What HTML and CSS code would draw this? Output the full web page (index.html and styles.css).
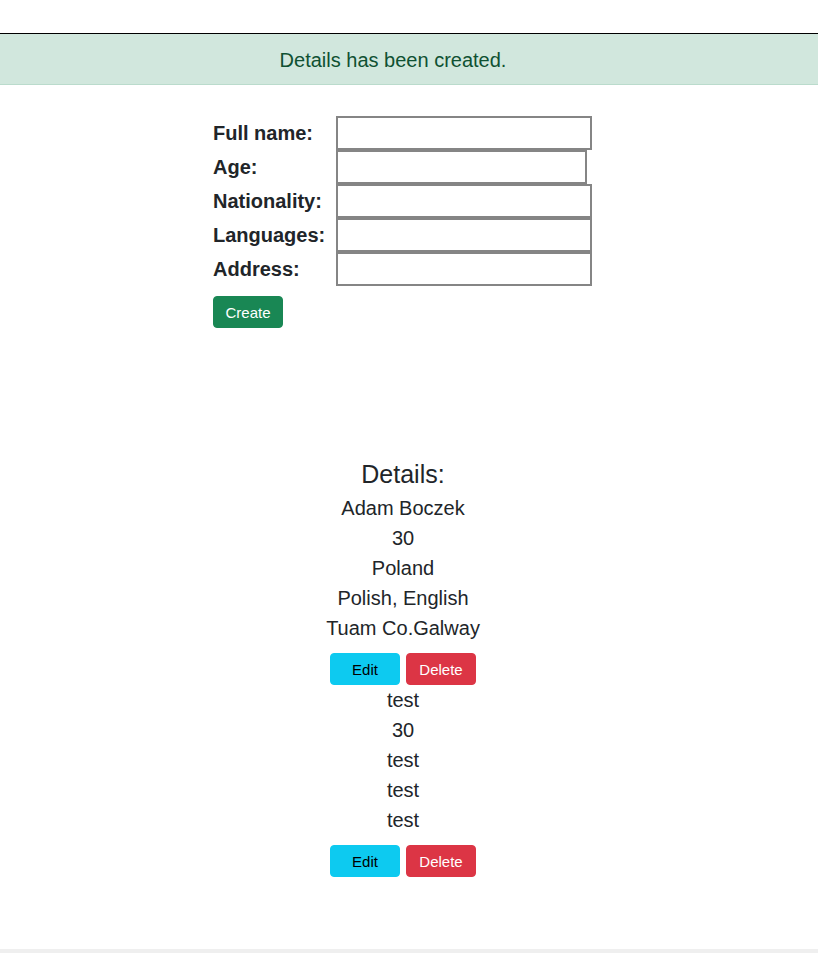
FILE: index.html
```html
<!DOCTYPE html>
<html lang="en">
<head>
<meta charset="utf-8">
<title>Details</title>
<link rel="stylesheet" href="styles.css">
</head>
<body>
<div class="page">
  <div class="topbar"></div>
  <div class="alert">Details has been created.</div>
  <form class="form">
    <div class="fields">
      <label class="lbl" for="fn">Full name:</label><input class="inp" id="fn" type="text">
      <label class="lbl" for="age">Age:</label><input class="inp inp-age" id="age" type="text">
      <label class="lbl" for="nat">Nationality:</label><input class="inp" id="nat" type="text">
      <label class="lbl" for="lang">Languages:</label><input class="inp" id="lang" type="text">
      <label class="lbl" for="addr">Address:</label><input class="inp" id="addr" type="text">
    </div>
    <button type="button" class="btn btn-create">Create</button>
  </form>
  <section class="details">
    <h2 class="details-title">Details:</h2>
    <div class="person">
      <div class="line">Adam Boczek</div>
      <div class="line">30</div>
      <div class="line">Poland</div>
      <div class="line">Polish, English</div>
      <div class="line">Tuam Co.Galway</div>
      <div class="actions">
        <button type="button" class="btn btn-edit">Edit</button>
        <button type="button" class="btn btn-delete">Delete</button>
      </div>
    </div>
    <div class="person">
      <div class="line">test</div>
      <div class="line">30</div>
      <div class="line">test</div>
      <div class="line">test</div>
      <div class="line">test</div>
      <div class="actions">
        <button type="button" class="btn btn-edit">Edit</button>
        <button type="button" class="btn btn-delete">Delete</button>
      </div>
    </div>
  </section>
  <div class="footer-band"></div>
</div>
</body>
</html>
```

FILE: styles.css
```css
html, body {
  margin: 0;
  padding: 0;
  background: #fff;
}
body {
  font-family: "Liberation Sans", Arial, sans-serif;
  color: #212529;
  font-size: 20px;
}
.page {
  display: flex;
  flex-direction: column;
}
.topbar {
  height: 33px;
  border-bottom: 1px solid #000;
}
.alert {
  background: #d1e7dd;
  color: #0f5132;
  border-bottom: 1px solid #badbcc;
  text-align: center;
  font-size: 20px;
  line-height: 24px;
  padding: 14px 32px 12px 0;
}
.form {
  margin: 31px 0 0 213px;
  display: flex;
  flex-direction: column;
  align-items: flex-start;
}
.fields {
  display: grid;
  grid-template-columns: 123px auto;
  align-items: center;
  justify-items: start;
}
.lbl {
  font-weight: bold;
  font-size: 20px;
  line-height: 23px;
}
.inp {
  box-sizing: border-box;
  width: 256px;
  height: 34px;
  margin: 0;
  border: 2px solid #858585;
  background: #fff;
  padding: 1px 4px;
  font-size: 16px;
  font-family: inherit;
  outline: none;
}
.inp-age {
  width: 251px;
}
.btn {
  box-sizing: border-box;
  width: 70px;
  height: 32px;
  border: 1px solid transparent;
  border-radius: 4px;
  font-family: "Liberation Sans", Arial, sans-serif;
  font-size: 15px;
  padding: 0;
  cursor: pointer;
}
.btn-create {
  margin-top: 10px;
  background: #198754;
  border-color: #198754;
  color: #fff;
}
.btn-edit {
  background: #0dcaf0;
  border-color: #0dcaf0;
  color: #000;
}
.btn-delete {
  background: #dc3545;
  border-color: #dc3545;
  color: #fff;
}
.details {
  margin-top: 131px;
  padding-right: 12px;
  text-align: center;
}
.details-title {
  margin: 0 0 4px;
  font-weight: normal;
  font-size: 25px;
  line-height: 30px;
}
.line {
  line-height: 30px;
}
.actions {
  display: flex;
  justify-content: center;
  gap: 6px;
  margin: 10px 0 0;
}
.footer-band {
  margin-top: 72px;
  height: 4px;
  background: #efefef;
}
```
